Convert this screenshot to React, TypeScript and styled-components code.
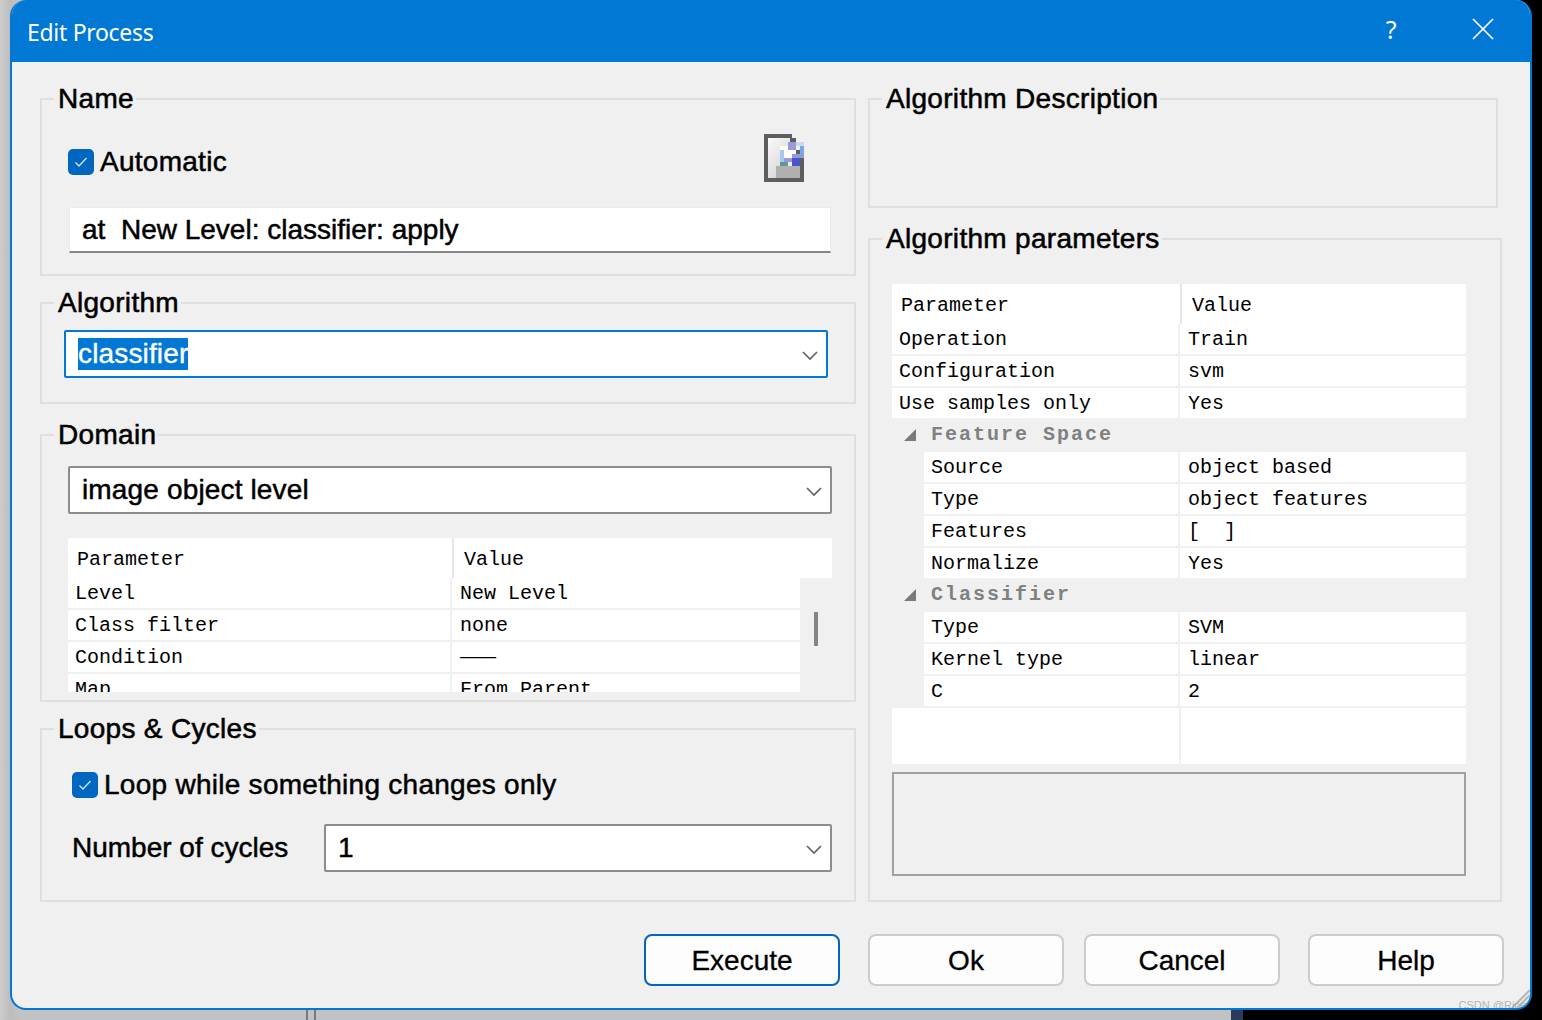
import React from "react";
import styled, { createGlobalStyle } from "styled-components";

const Global = createGlobalStyle`
  html, body { margin: 0; padding: 0; height: 1020px; overflow: hidden; }
  body { font-family: "Liberation Sans", Arial, sans-serif; }
`;

const Page = styled.div`
  width: 1542px;
  height: 1020px;
  box-sizing: border-box;
  padding-left: 10px;
  background:
    linear-gradient(#000, #000) 1532px 0 / 10px 100% no-repeat,
    linear-gradient(90deg, #cdcdcd 0, #bdbdbd 10px, #c2c2c2 20px, #c2c2c2 306px, #7a7a7a 306px, #7a7a7a 308px, #c2c2c2 308px, #c2c2c2 314px, #7a7a7a 314px, #7a7a7a 316px, #c2c2c2 316px, #c2c2c2 1231px, #2c3b5c 1231px, #2c3b5c 1243px, #000 1243px);
`;

const Dialog = styled.div`
  position: relative;
  width: 1522px;
  height: 1010px;
  box-sizing: border-box;
  border: 2px solid #0078d4;
  border-top: 0;
  border-radius: 16px;
  background: #f0f0f0;
  overflow: hidden;
  display: flex;
  flex-direction: column;
`;

const TitleBar = styled.header`
  height: 62px;
  flex: none;
  background: #0078d4;
  color: #fff;
  display: flex;
  align-items: center;
  padding: 2px 0 0 15px;
  box-sizing: border-box;
  font: 400 23px/1 "Noto Sans", "Open Sans", sans-serif;
  letter-spacing: -0.3px;
`;

const TitleText = styled.span`
  flex: 1;
`;

const HelpGlyph = styled.span`
  width: 20px;
  margin-right: 71px;
  margin-top: -6px;
  text-align: center;
  font: 400 25px/1 "Noto Sans", sans-serif;
`;

const CloseIcon = styled.svg`
  width: 22px;
  height: 22px;
  margin-right: 36px;
  margin-top: -6px;
`;

const Columns = styled.div`
  display: flex;
  gap: 12px;
  padding: 23px 0 0 28px;
`;

const LeftColumn = styled.div`
  width: 816px;
  display: flex;
  flex-direction: column;
`;

const RightColumn = styled.div`
  width: 634px;
  display: flex;
  flex-direction: column;
`;

const Group = styled.fieldset<{ $h: number; $top?: number; $w?: number }>`
  box-sizing: border-box;
  margin: ${(p) => p.$top ?? 0}px 0 0;
  padding: 0;
  height: ${(p) => p.$h}px;
  width: ${(p) => (p.$w ? `${p.$w}px` : "auto")};
  min-width: 0;
  border: 2px solid #dfdfdf;
`;

const GroupTitle = styled.legend`
  margin-left: 12px;
  padding: 0 2px 0 4px;
  font-size: 28px;
  line-height: 28px;
  letter-spacing: 0.3px;
  color: #000;
  -webkit-text-stroke: 0.55px #000;
`;

const NameRow = styled.div`
  height: 48px;
  margin-top: 21px;
  padding: 0 48px 0 26px;
  display: flex;
  align-items: center;
  justify-content: space-between;
`;

const CheckLabel = styled.label<{ $inset?: number; $top?: number }>`
  display: flex;
  align-items: center;
  gap: 6px;
  font-size: 28px;
  line-height: 28px;
  color: #000;
  -webkit-text-stroke: 0.5px #000;
  letter-spacing: 0.27px;
  margin: ${(p) => p.$top ?? 0}px 0 0 ${(p) => p.$inset ?? 0}px;
`;

const CheckBox = styled.span`
  width: 26px;
  height: 26px;
  flex: none;
  border-radius: 5px;
  background: #0067c0;
  display: flex;
  align-items: center;
  justify-content: center;
  -webkit-text-stroke: 0;
`;

const TextField = styled.div`
  box-sizing: border-box;
  margin: 25px 0 0 27px;
  width: 762px;
  height: 46px;
  padding: 0 12px;
  background: #fff;
  border: 1px solid #ececec;
  border-bottom: 2px solid #868686;
  display: flex;
  align-items: center;
  font-size: 28px;
  -webkit-text-stroke: 0.5px #000;
  white-space: pre;
`;

const Combo = styled.div<{ $focus?: boolean; $w: number; $left: number; $top: number }>`
  box-sizing: border-box;
  width: ${(p) => p.$w}px;
  height: 48px;
  margin: ${(p) => p.$top}px 0 0 ${(p) => p.$left}px;
  padding: 0 12px;
  background: #fff;
  border: 2px solid ${(p) => (p.$focus ? "#0078d4" : "#8c8c8c")};
  border-radius: 2px;
  display: flex;
  align-items: center;
  justify-content: space-between;
  font-size: 28px;
  letter-spacing: 0.15px;
  -webkit-text-stroke: 0.5px #000;
`;

const ComboValue = styled.span<{ $selected?: boolean }>`
  line-height: 32px;
  ${(p) =>
    p.$selected
      ? "background: #0078d4; color: #fff; -webkit-text-stroke: 0.4px #fff;"
      : "color: #000;"}
`;

const Chevron = styled.svg`
  width: 16px;
  height: 11px;
  margin: 2px -4px 0 0;
  flex: none;
`;

const CycleRow = styled.div`
  display: flex;
  align-items: center;
  padding-left: 30px;
  margin-top: 25px;
`;

const CycleLabel = styled.span`
  width: 252px;
  font-size: 28px;
  color: #000;
  -webkit-text-stroke: 0.5px #000;
`;

const DomainTable = styled.div`
  margin: 24px 0 0 26px;
  width: 764px;
`;

const ClipBody = styled.div`
  height: 114px;
  display: flex;
  overflow: hidden;
`;

const ClipRows = styled.div`
  width: 732px;
  flex: none;
`;

const ScrollTrack = styled.div`
  flex: 1;
  padding: 34px 0 0 14px;
`;

const ScrollThumb = styled.div`
  width: 4px;
  height: 34px;
  background: #858585;
`;

const Row = styled.div<{ $first: number; $indent?: number }>`
  display: grid;
  grid-template-columns: ${(p) => p.$first}px 1fr;
  column-gap: 2px;
  margin: 0 0 2px ${(p) => p.$indent ?? 0}px;
  height: 30px;
`;

const HeadRow = styled.div<{ $first: number; $h: number }>`
  display: grid;
  grid-template-columns: ${(p) => p.$first}px 1fr;
  height: ${(p) => p.$h}px;
  background: #fff;
`;

const HeadCell = styled.div<{ $divider?: boolean }>`
  box-sizing: border-box;
  padding-left: ${(p) => (p.$divider ? 10 : 9)}px;
  font: 400 20px/44px "Liberation Mono", "DejaVu Sans Mono", monospace;
  color: #000;
  ${(p) => (p.$divider ? "border-left: 2px solid #e6e6e6;" : "")}
`;

const Cell = styled.div<{ $value?: boolean }>`
  background: #fff;
  padding-left: ${(p) => (p.$value ? 8 : 7)}px;
  font: 400 20px/32px "Liberation Mono", "DejaVu Sans Mono", monospace;
  color: #000;
  white-space: pre;
  overflow: hidden;
`;

const ParamTable = styled.div`
  margin: 31px 0 0 22px;
  width: 574px;
`;

const SectionRow = styled.div`
  height: 30px;
  margin-bottom: 2px;
  display: flex;
  align-items: center;
  padding-left: 12px;
  gap: 15px;
  font: 700 20px/32px "Liberation Mono", "DejaVu Sans Mono", monospace;
  letter-spacing: 2px;
  color: #808080;
`;

const Arrow = styled.svg`
  width: 12px;
  height: 12px;
  flex: none;
`;

const EmptyRow = styled.div`
  height: 56px;
  background: #fff;
  display: grid;
  grid-template-columns: 287px 2px;
`;

const EmptyDivider = styled.div`
  grid-column: 2;
  background: #efefef;
`;

const NoteBox = styled.div`
  box-sizing: border-box;
  margin: 8px 0 0 22px;
  width: 574px;
  height: 104px;
  border: 2px solid #a0a0a0;
`;

const Footer = styled.footer`
  display: flex;
  padding: 32px 0 0 632px;
`;

const Button = styled.button<{ $primary?: boolean; $gap?: number }>`
  width: 196px;
  height: 52px;
  margin-left: ${(p) => p.$gap ?? 0}px;
  box-sizing: border-box;
  background: #fdfdfd;
  border: 2px solid ${(p) => (p.$primary ? "#0067c0" : "#cccccc")};
  border-radius: 8px;
  font: 400 28px "Liberation Sans", Arial, sans-serif;
  color: #000;
  -webkit-text-stroke: 0.3px #000;
  padding: 2px 0 0;
`;

const Grip = styled.svg`
  position: absolute;
  right: 0;
  bottom: 0;
  width: 22px;
  height: 22px;
`;

const Watermark = styled.span`
  position: absolute;
  right: 4px;
  bottom: -4px;
  font: 400 11px/14px "Liberation Sans", sans-serif;
  color: #a9a9a9;
  opacity: 0.85;
`;

const Check = () => (
  <svg width="14" height="12" viewBox="0 0 14 12" fill="none">
    <path d="M1.5 6.5 L5 10 L12.5 2" stroke="#cfe4f7" strokeWidth="1.3" />
  </svg>
);

const Down = () => (
  <Chevron viewBox="0 0 16 11" fill="none">
    <path d="M1 2 L8 9 L15 2" stroke="#606060" strokeWidth="1.6" />
  </Chevron>
);

const DocIcon = () => (
  <svg width="42" height="48" viewBox="0 0 42 48" shapeRendering="crispEdges">
    <defs>
      <linearGradient id="sheet" x1="0" y1="0" x2="1" y2="1">
        <stop offset="0" stopColor="#fafafa" />
        <stop offset="0.55" stopColor="#dedede" />
        <stop offset="1" stopColor="#b4b4b4" />
      </linearGradient>
    </defs>
    <path d="M0 0 H28 V4 H32 V16 H40 V48 H0 Z" fill="#5e5e5e" />
    <path d="M4 4 H26 V8 H30 V20 H36 V44 H4 Z" fill="url(#sheet)" />
    <rect x="12" y="32" width="24" height="12" fill="#b0b0b0" />
    <rect x="16" y="12" width="16" height="16" fill="#ffffff" />
    <rect x="16" y="16" width="4" height="12" fill="#a9c8ee" />
    <rect x="24" y="8" width="8" height="8" fill="#9a9ad6" />
    <rect x="32" y="8" width="8" height="4" fill="#c7d8f3" />
    <rect x="36" y="12" width="4" height="8" fill="#79a9e2" />
    <rect x="28" y="20" width="12" height="4" fill="#8c9ae0" />
    <rect x="28" y="24" width="8" height="8" fill="#4a56c8" />
    <rect x="20" y="24" width="8" height="4" fill="#9a9ad6" />
    <rect x="16" y="28" width="8" height="4" fill="#5b9a9a" />
    <rect x="24" y="28" width="4" height="4" fill="#eceaff" />
  </svg>
);

const Grid = ({ rows, first, indent }: { rows: [string, string][]; first: number; indent?: number }) => (
  <>
    {rows.map(([k, v]) => (
      <Row key={k + v} $first={first} $indent={indent}>
        <Cell>{k}</Cell>
        <Cell $value>{v}</Cell>
      </Row>
    ))}
  </>
);

const Section = ({ title }: { title: string }) => (
  <SectionRow>
    <Arrow viewBox="0 0 12 12">
      <path d="M12 0 V12 H0 Z" fill="#7a7a7a" />
    </Arrow>
    {title}
  </SectionRow>
);

export default function App() {
  return (
    <Page>
      <Global />
      <Dialog>
        <TitleBar>
          <TitleText>Edit Process</TitleText>
          <HelpGlyph>?</HelpGlyph>
          <CloseIcon viewBox="0 0 22 22" fill="none">
            <path d="M1 1 L21 21 M21 1 L1 21" stroke="#fff" strokeWidth="1.7" />
          </CloseIcon>
        </TitleBar>
        <Columns>
          <LeftColumn>
            <Group $h={191}>
              <GroupTitle>Name</GroupTitle>
              <NameRow>
                <CheckLabel $top={8}>
                  <CheckBox>
                    <Check />
                  </CheckBox>
                  Automatic
                </CheckLabel>
                <DocIcon />
              </NameRow>
              <TextField>at  New Level: classifier: apply</TextField>
            </Group>
            <Group $h={115} $top={13}>
              <GroupTitle>Algorithm</GroupTitle>
              <Combo $focus $w={764} $left={22} $top={13}>
                <ComboValue $selected>classifier</ComboValue>
                <Down />
              </Combo>
            </Group>
            <Group $h={281} $top={17}>
              <GroupTitle>Domain</GroupTitle>
              <Combo $w={764} $left={26} $top={17}>
                <ComboValue>image object level</ComboValue>
                <Down />
              </Combo>
              <DomainTable>
                <HeadRow $first={384} $h={40}>
                  <HeadCell>Parameter</HeadCell>
                  <HeadCell $divider>Value</HeadCell>
                </HeadRow>
                <ClipBody>
                  <ClipRows>
                    <Grid
                      first={382}
                      rows={[
                        ["Level", "New Level"],
                        ["Class filter", "none"],
                        ["Condition", "———"],
                        ["Map", "From Parent"],
                      ]}
                    />
                  </ClipRows>
                  <ScrollTrack>
                    <ScrollThumb />
                  </ScrollTrack>
                </ClipBody>
              </DomainTable>
            </Group>
            <Group $h={187} $top={13}>
              <GroupTitle>Loops &amp; Cycles</GroupTitle>
              <CheckLabel $inset={30} $top={28}>
                <CheckBox>
                  <Check />
                </CheckBox>
                Loop while something changes only
              </CheckLabel>
              <CycleRow>
                <CycleLabel>Number of cycles</CycleLabel>
                <Combo $w={508} $left={0} $top={0}>
                  <ComboValue>1</ComboValue>
                  <Down />
                </Combo>
              </CycleRow>
            </Group>
          </LeftColumn>
          <RightColumn>
            <Group $h={123} $w={630}>
              <GroupTitle>Algorithm Description</GroupTitle>
            </Group>
            <Group $h={677} $top={17}>
              <GroupTitle>Algorithm parameters</GroupTitle>
              <ParamTable>
                <HeadRow $first={288} $h={40}>
                  <HeadCell>Parameter</HeadCell>
                  <HeadCell $divider>Value</HeadCell>
                </HeadRow>
                <Grid
                  first={286}
                  rows={[
                    ["Operation", "Train"],
                    ["Configuration", "svm"],
                    ["Use samples only", "Yes"],
                  ]}
                />
                <Section title="Feature Space" />
                <Grid
                  first={254}
                  indent={32}
                  rows={[
                    ["Source", "object based"],
                    ["Type", "object features"],
                    ["Features", "[  ]"],
                    ["Normalize", "Yes"],
                  ]}
                />
                <Section title="Classifier" />
                <Grid
                  first={254}
                  indent={32}
                  rows={[
                    ["Type", "SVM"],
                    ["Kernel type", "linear"],
                    ["C", "2"],
                  ]}
                />
                <EmptyRow>
                  <EmptyDivider />
                </EmptyRow>
              </ParamTable>
              <NoteBox />
            </Group>
          </RightColumn>
        </Columns>
        <Footer>
          <Button $primary>Execute</Button>
          <Button $gap={28}>Ok</Button>
          <Button $gap={20}>Cancel</Button>
          <Button $gap={28}>Help</Button>
        </Footer>
        <Grip viewBox="0 0 22 22" fill="none">
          <path d="M22 4 L4 22 M22 9 L9 22 M22 14 L14 22 M22 19 L19 22" stroke="#b5b5b5" strokeWidth="2" />
        </Grip>
        <Watermark>CSDN @Rice</Watermark>
      </Dialog>
    </Page>
  );
}
